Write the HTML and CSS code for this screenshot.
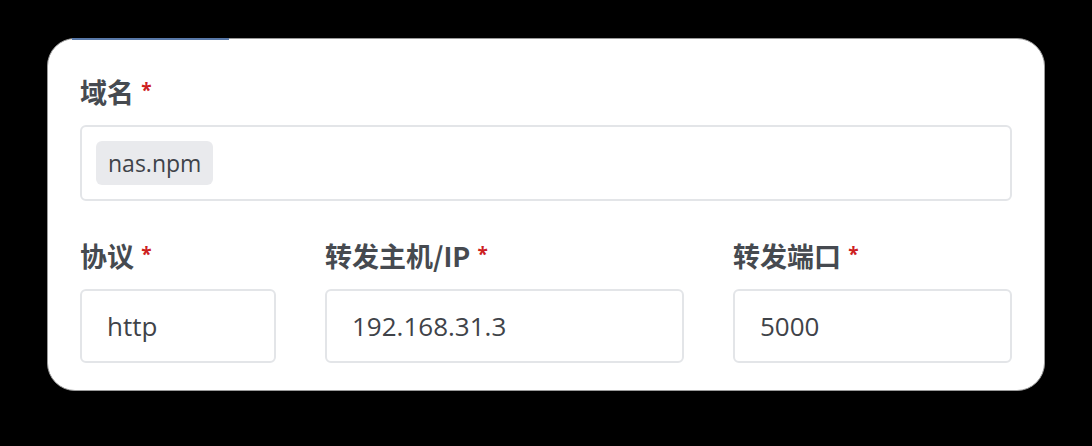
FILE: index.html
```html
<!DOCTYPE html>
<html lang="zh">
<head>
<meta charset="utf-8">
<link rel="stylesheet" href="styles.css">
</head>
<body>
<div class="card">
  <div class="field">
    <label class="label">域名 <span class="req">*</span></label>
    <div class="input tags"><span class="tag">nas.npm</span></div>
  </div>
  <div class="row">
    <div class="field">
      <label class="label">协议 <span class="req">*</span></label>
      <div class="input">http</div>
    </div>
    <div class="field">
      <label class="label">转发主机/IP <span class="req">*</span></label>
      <div class="input">192.168.31.3</div>
    </div>
    <div class="field">
      <label class="label">转发端口 <span class="req">*</span></label>
      <div class="input">5000</div>
    </div>
  </div>
</div>
</body>
</html>
```
FILE: styles.css
```css
html, body {
  margin: 0;
  padding: 0;
  background: #000;
}
body {
  width: 1092px;
  height: 446px;
  overflow: hidden;
  font-family: "Open Sans", "Noto Sans CJK SC", sans-serif;
}
.card {
  position: relative;
  margin: 38px 0 0 47px;
  width: 998px;
  height: 353px;
  box-sizing: border-box;
  background: #fff;
  border: 1px solid #9a9a9a;
  border-radius: 28px;
  padding: 34px 32px 0 32px;
}
.card::before {
  content: "";
  position: absolute;
  top: -1px;
  left: 24px;
  width: 157px;
  height: 2px;
  background: #5878a8;
}
.label {
  display: block;
  font-family: "Noto Sans CJK SC", "Open Sans", sans-serif;
  font-weight: 700;
  font-size: 27px;
  line-height: 34px;
  color: #464a50;
  margin-bottom: 16px;
}
.req {
  color: #cd201f;
  font-family: "Open Sans", sans-serif;
  font-size: 19px;
  vertical-align: 6px;
  margin-left: 1px;
}
.input {
  box-sizing: border-box;
  height: 74px;
  border: 2px solid #e3e5e8;
  border-radius: 6px;
  padding: 0 25px;
  display: flex;
  align-items: center;
  font-size: 26px;
  color: #3f4349;
}
.input.tags {
  height: 76px;
  padding: 0 14px;
}
.tag {
  background: #e9eaed;
  border-radius: 6px;
  height: 44px;
  padding: 0 12px;
  display: flex;
  align-items: center;
  font-size: 23px;
  color: #3f4349;
}
.row {
  display: grid;
  grid-template-columns: 196px 359px 1fr;
  column-gap: 49px;
  margin-top: 36px;
}
```
